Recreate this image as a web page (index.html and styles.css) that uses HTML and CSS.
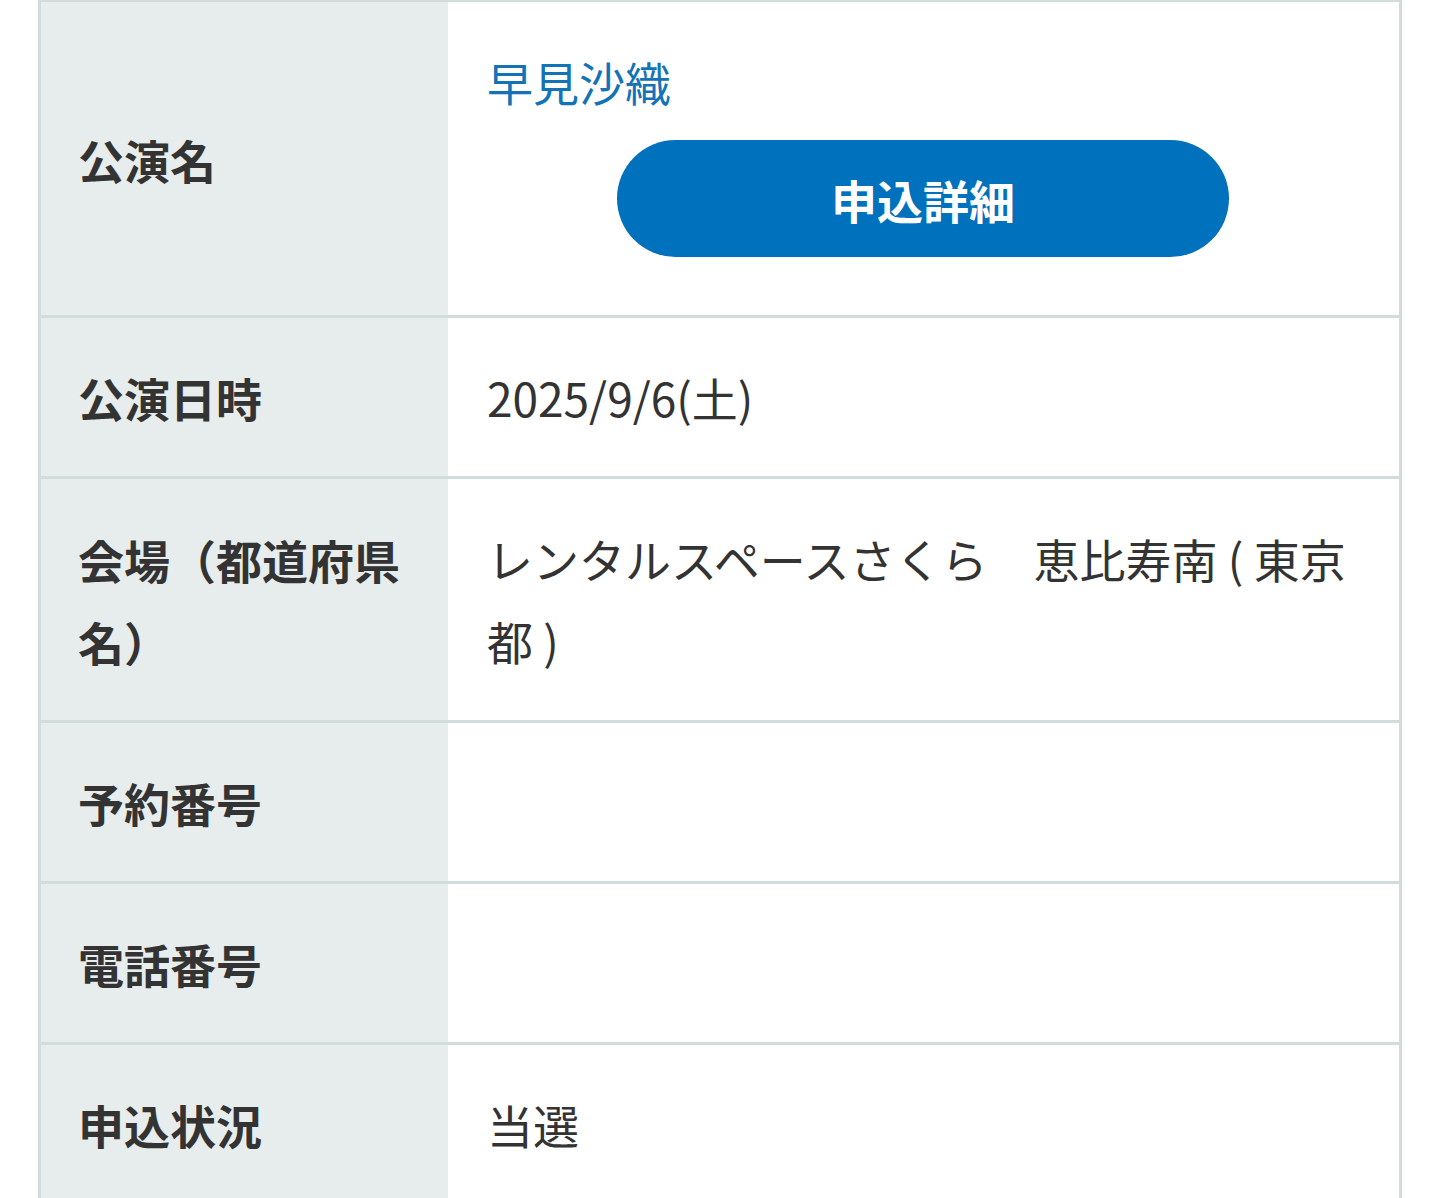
FILE: index.html
```html
<!DOCTYPE html>
<html lang="ja">
<head>
<meta charset="utf-8">
<title>申込詳細</title>
<link rel="stylesheet" href="styles.css">
</head>
<body>
<div class="table">
  <div class="row">
    <div class="label">公演名</div>
    <div class="value">
      <a class="title-link" href="#">早見沙織</a>
      <a class="btn" href="#">申込詳細</a>
    </div>
  </div>
  <div class="row">
    <div class="label">公演日時</div>
    <div class="value">2025/9/6(土)</div>
  </div>
  <div class="row row-tall">
    <div class="label">会場（都道府県名）</div>
    <div class="value">レンタルスペースさくら　恵比寿南 ( 東京都 )</div>
  </div>
  <div class="row">
    <div class="label">予約番号</div>
    <div class="value"></div>
  </div>
  <div class="row">
    <div class="label">電話番号</div>
    <div class="value"></div>
  </div>
  <div class="row">
    <div class="label">申込状況</div>
    <div class="value">当選</div>
  </div>
</div>
</body>
</html>
```

FILE: styles.css
```css
html, body {
  margin: 0;
  padding: 0;
  background: #ffffff;
}

body {
  font-family: "Noto Sans CJK JP", "Noto Sans", sans-serif;
  color: #333333;
  font-size: 46px;
  line-height: 82px;
}

.table {
  margin-left: 38px;
  width: 1364px;
  box-sizing: border-box;
  border: 3px solid #d3dcdc;
  border-top-width: 2px;
}

.row {
  display: grid;
  grid-template-columns: 407px 1fr;
  border-bottom: 3px solid #d3dcdc;
}

.label {
  background: #e7ecec;
  font-weight: 700;
  padding: 38px 40px 38px 37px;
  display: flex;
  align-items: center;
}

.value {
  padding: 38px 40px 38px 39px;
  min-height: 82px;
  font-weight: 400;
}

.row-tall .value {
  padding-bottom: 39px;
}

.title-link {
  display: block;
  color: #1473b6;
  text-decoration: none;
}

.btn {
  display: flex;
  align-items: center;
  justify-content: center;
  width: 612px;
  height: 117px;
  margin: 18px auto 20px;
  border-radius: 59px;
  background: #0071bc;
  color: #ffffff;
  font-weight: 700;
  text-decoration: none;
}
```
